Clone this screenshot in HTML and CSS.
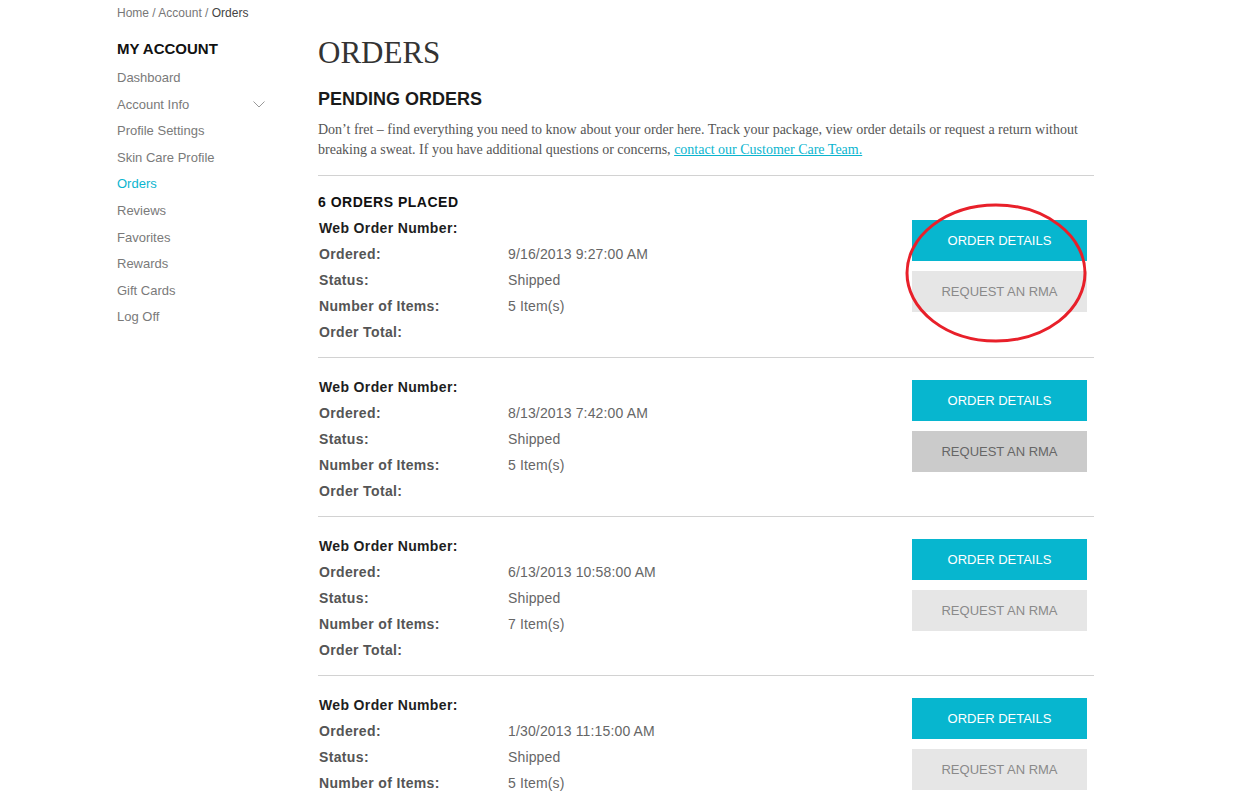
FILE: index.html
```html
<!DOCTYPE html>
<html>
<head>
<meta charset="UTF-8"/>
<title>Orders</title>
<link rel="stylesheet" href="styles.css">
</head>
<body>
<div class="page">
	<div class="breadcrumb"><a href="#">Home</a> / <a href="#">Account</a> / <span>Orders</span></div>
	<div class="columns">
		<nav class="sidebar">
			<h2>MY ACCOUNT</h2>
			<ul class="accountNav">
				<li><a href="#">Dashboard</a></li>
				<li class="hasSub"><a href="#">Account Info</a><svg class="chevron" width="12" height="7" viewBox="0 0 12 7"><path d="M0.5 0.5 L6 6 L11.5 0.5" fill="none" stroke="#999" stroke-width="1"/></svg></li>
				<li><a href="#">Profile Settings</a></li>
				<li><a href="#">Skin Care Profile</a></li>
				<li class="active"><a href="#">Orders</a></li>
				<li><a href="#">Reviews</a></li>
				<li><a href="#">Favorites</a></li>
				<li><a href="#">Rewards</a></li>
				<li><a href="#">Gift Cards</a></li>
				<li><a href="#">Log Off</a></li>
			</ul>
		</nav>
		<main class="content">
			<h1>ORDERS</h1>
			<h2>PENDING ORDERS</h2>
			<p class="intro">Don’t fret – find everything you need to know about your order here. Track your package, view order details or request a return without breaking a sweat. If you have additional questions or concerns, <a href="#">contact our Customer Care Team.</a></p>
			<section class="orders">
				<h3>6 ORDERS PLACED</h3>

				<div class="order">
					<dl class="orderInfo">
						<dt class="num">Web Order Number:</dt><dd></dd>
						<dt>Ordered:</dt><dd>9/16/2013 9:27:00 AM</dd>
						<dt>Status:</dt><dd>Shipped</dd>
						<dt>Number of Items:</dt><dd>5 Item(s)</dd>
						<dt>Order Total:</dt><dd></dd>
					</dl>
					<div class="actions">
						<a class="btn details" href="#">ORDER DETAILS</a>
						<a class="btn rma" href="#">REQUEST AN RMA</a>
					</div>
				</div>

				<div class="order">
					<dl class="orderInfo">
						<dt class="num">Web Order Number:</dt><dd></dd>
						<dt>Ordered:</dt><dd>8/13/2013 7:42:00 AM</dd>
						<dt>Status:</dt><dd>Shipped</dd>
						<dt>Number of Items:</dt><dd>5 Item(s)</dd>
						<dt>Order Total:</dt><dd></dd>
					</dl>
					<div class="actions">
						<a class="btn details" href="#">ORDER DETAILS</a>
						<a class="btn rma hover" href="#">REQUEST AN RMA</a>
					</div>
				</div>

				<div class="order">
					<dl class="orderInfo">
						<dt class="num">Web Order Number:</dt><dd></dd>
						<dt>Ordered:</dt><dd>6/13/2013 10:58:00 AM</dd>
						<dt>Status:</dt><dd>Shipped</dd>
						<dt>Number of Items:</dt><dd>7 Item(s)</dd>
						<dt>Order Total:</dt><dd></dd>
					</dl>
					<div class="actions">
						<a class="btn details" href="#">ORDER DETAILS</a>
						<a class="btn rma" href="#">REQUEST AN RMA</a>
					</div>
				</div>

				<div class="order">
					<dl class="orderInfo">
						<dt class="num">Web Order Number:</dt><dd></dd>
						<dt>Ordered:</dt><dd>1/30/2013 11:15:00 AM</dd>
						<dt>Status:</dt><dd>Shipped</dd>
						<dt>Number of Items:</dt><dd>5 Item(s)</dd>
						<dt>Order Total:</dt><dd></dd>
					</dl>
					<div class="actions">
						<a class="btn details" href="#">ORDER DETAILS</a>
						<a class="btn rma" href="#">REQUEST AN RMA</a>
					</div>
				</div>
			</section>
		</main>
	</div>
	<svg class="annotation" width="186" height="144" viewBox="0 0 186 144"><ellipse cx="93" cy="72" rx="89" ry="68" fill="none" stroke="#e8202a" stroke-width="3"/></svg>
</div>
</body>
</html>
```

FILE: styles.css
```css
	html, body { margin: 0; }
	body { font-family: 'Liberation Sans', Arial, sans-serif; font-size: 13px; color: #555; background: #fff; overflow: hidden; }
	a { text-decoration: none; color: inherit; }
	ul { list-style: none; margin: 0; padding: 0; }

	.page { position: relative; padding: 5px 0 0 117px; width: 977px; }
	.breadcrumb { font-size: 12px; line-height: 16px; color: #777; }
	.breadcrumb span { color: #444; }

	.columns { display: flex; }
	.sidebar { width: 201px; flex-shrink: 0; }
	.sidebar h2 { margin: 18px 0 6px; font-size: 15px; line-height: 20px; color: #111; font-weight: bold; }
	.accountNav li { line-height: 26.6px; color: #7a7a7a; display: flex; align-items: center; }
	.accountNav li.active { color: #0bb5cf; }
	.accountNav li.hasSub { width: 148px; justify-content: space-between; }
	.chevron { display: block; }

	.content { flex-grow: 1; }
	.content h1 {
		margin: 12px 0 0; font-family: 'Liberation Serif', 'Times New Roman', serif;
		font-weight: normal; font-size: 31px; line-height: 40px; color: #333;
	}
	.content h2 { margin: 14px 0 0; font-size: 18px; line-height: 24px; color: #1a1a1a; }
	.intro {
		margin: 9px 0 0; font-family: 'Liberation Serif', 'Times New Roman', serif;
		font-size: 14px; line-height: 20px; color: #555;
		padding-bottom: 15px; border-bottom: 1px solid #d2d2d2;
	}
	.intro a { color: #0bb5cf; text-decoration: underline; }

	.orders { padding-top: 13px; }
	.orders h3 { margin: 0; font-size: 14px; line-height: 26px; color: #111; letter-spacing: 0.5px; }
	.order { display: flex; justify-content: space-between; padding: 16px 7px 12px 1px; border-bottom: 1px solid #d2d2d2; }
	.orders h3 + .order { padding-top: 0; }
	.orderInfo { display: grid; grid-template-columns: 189px 200px; margin: 0; font-size: 14px; line-height: 26px; }
	.orderInfo dt { font-weight: bold; color: #555; letter-spacing: 0.35px; }
	.orderInfo dt.num { color: #1e1e1e; }
	.orderInfo dd { margin: 0; color: #666; letter-spacing: 0.15px; }

	.actions { display: flex; flex-direction: column; gap: 10px; margin-top: 6px; width: 175px; }
	.orders h3 + .order .actions { margin-top: 5px; }
	.btn { display: flex; align-items: center; justify-content: center; height: 41px; font-size: 13px; }
	.btn.details { background: #07b6cf; color: #fff; }
	.btn.rma { background: #e6e6e6; color: #8a8a8a; }
	.btn.rma.hover { background: #cbcbcb; color: #666; }

	.annotation { position: absolute; left: 903px; top: 201px; pointer-events: none; }
```
